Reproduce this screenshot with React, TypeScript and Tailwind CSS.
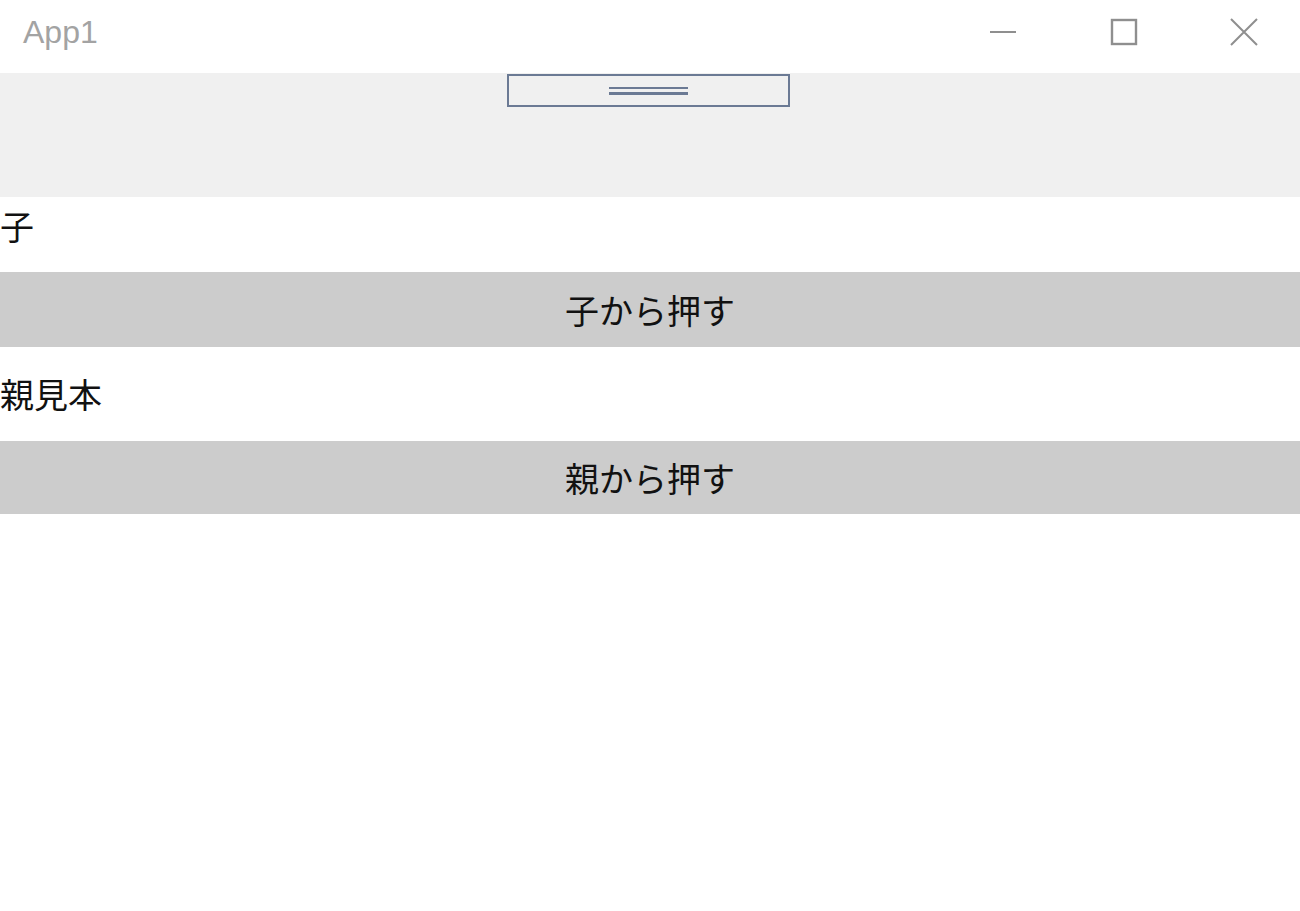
import { useState } from "react";

function TitleBar() {
  return (
    <div className="h-[73px] bg-white">
      <div className="h-[64px] flex items-center justify-between">
        <span
          className="pl-[23px] text-[32px] text-[#a3a3a3]"
          style={{ fontFamily: '"Liberation Sans", Arial, sans-serif' }}
        >
          App1
        </span>
        <div className="flex h-full">
          <button className="w-[114px] h-full flex items-center justify-center">
            <svg width="28" height="28" viewBox="0 0 28 28">
              <line x1="1" y1="14" x2="27" y2="14" stroke="#8f8f8f" strokeWidth="2" />
            </svg>
          </button>
          <button className="w-[128px] h-full flex items-center justify-center">
            <svg width="28" height="28" viewBox="0 0 28 28">
              <rect x="2" y="2" width="24" height="24" fill="none" stroke="#8f8f8f" strokeWidth="2.4" />
            </svg>
          </button>
          <button className="w-[112px] h-full flex items-center justify-center">
            <svg width="30" height="30" viewBox="0 0 30 30">
              <path d="M2 2 L28 28 M28 2 L2 28" stroke="#8f8f8f" strokeWidth="2" />
            </svg>
          </button>
        </div>
      </div>
    </div>
  );
}

function App() {
  const [pressed, setPressed] = useState<string | null>(null);
  const jp = { fontFamily: '"Noto Sans CJK JP", "Noto Sans", sans-serif' };

  return (
    <div className="w-[1300px] h-[911px] bg-white overflow-hidden text-[#111111]" style={jp}>
      <TitleBar />

      <div className="h-[124px] bg-[#f0f0f0] flex justify-center">
        <div className="mt-[1px] -ml-[4px] w-[283px] h-[33px] border-[2.5px] border-[#6b7a94] flex flex-col items-center justify-center gap-[3px]">
          <div className="w-[79px] h-[2.5px] bg-[#6b7a94]" />
          <div className="w-[79px] h-[2.5px] bg-[#6b7a94]" />
        </div>
      </div>

      <div className="h-[75px] leading-[58px] text-[34px]">子</div>
      <button
        onClick={() => setPressed("child")}
        className="w-full h-[75px] bg-[#cccccc] text-[34px] flex items-center justify-center"
      >
        子から押す
      </button>

      <div className="h-[94px] leading-[94px] text-[34px]">
        {pressed === "parent" ? "親見本" : "親見本"}
      </div>
      <button
        onClick={() => setPressed("parent")}
        className="w-full h-[73px] bg-[#cccccc] text-[34px] flex items-center justify-center"
      >
        親から押す
      </button>
    </div>
  );
}

export default App;
